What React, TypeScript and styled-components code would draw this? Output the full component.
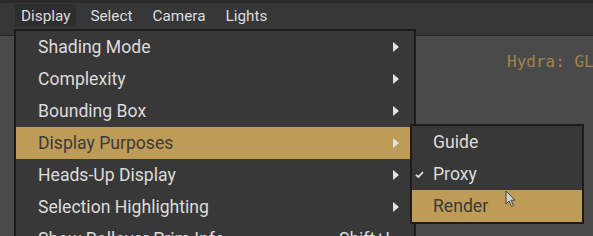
import styled, { createGlobalStyle } from "styled-components";

const GlobalStyle = createGlobalStyle`
  html, body {
    margin: 0;
    padding: 0;
    background: #363636;
    overflow: hidden;
  }
  body {
    font-family: Roboto, "Noto Sans", "Liberation Sans", sans-serif;
  }
`;

const Screen = styled.div`
  position: relative;
  width: 593px;
  height: 236px;
  display: flex;
  flex-direction: column;
  background: #363636;
`;

const TopEdge = styled.div`
  height: 3px;
  background: #2a2a2a;
`;

const MenuBar = styled.div`
  height: 32px;
  display: flex;
  align-items: flex-start;
  gap: 8px;
  padding-left: 15px;
  border-bottom: 1px solid #262626;
  background: #373737;
`;

const BarItem = styled.div<{ $open?: boolean }>`
  height: 23px;
  margin-top: 1px;
  padding: 0 6px;
  display: flex;
  align-items: center;
  font-size: 15.3px;
  color: #dcdcdc;
  background: ${(p) => (p.$open ? "#2e2e2e" : "transparent")};
`;

const Viewport = styled.div`
  flex: 1;
  background: #4a4a4a;
  display: flex;
  justify-content: flex-end;
  padding-top: 16px;
`;

const Renderer = styled.div`
  width: 86px;
  overflow: hidden;
  white-space: nowrap;
  font-family: "DejaVu Sans Mono", "Liberation Mono", monospace;
  font-size: 16px;
  color: #a2844a;
`;

const Menu = styled.div<{ $left: number; $top: number; $width: number }>`
  position: absolute;
  left: ${(p) => p.$left}px;
  top: ${(p) => p.$top}px;
  width: ${(p) => p.$width}px;
  border: 2px solid #1c1c1c;
  background: #383838;
  display: flex;
  flex-direction: column;
`;

const Item = styled.div<{ $active?: boolean; $indent: number }>`
  height: 32px;
  flex: none;
  display: flex;
  align-items: center;
  padding-left: ${(p) => p.$indent}px;
  padding-right: 15px;
  font-size: 17.6px;
  color: ${(p) => (p.$active ? "#3a3a3a" : "#dcdcdc")};
  background: ${(p) => (p.$active ? "#bf9c56" : "transparent")};
  position: relative;
  white-space: nowrap;
`;

const Label = styled.span`
  flex: 1;
`;

const Shortcut = styled.span`
  margin-right: 9px;
`;

const Arrow = styled.span`
  width: 0;
  height: 0;
  border-top: 5px solid transparent;
  border-bottom: 5px solid transparent;
  border-left: 6px solid #e2e2e2;
`;

const Check = styled.svg`
  position: absolute;
  left: 3px;
  top: 13px;
`;

const Cursor = styled.svg`
  position: absolute;
  left: 505px;
  top: 190px;
`;

const mainItems = [
  { label: "Shading Mode" },
  { label: "Complexity" },
  { label: "Bounding Box" },
  { label: "Display Purposes", active: true },
  { label: "Heads-Up Display" },
  { label: "Selection Highlighting" },
  { label: "Show Rollover Prim Info", shortcut: "Shift+I" },
];

const purposes = [
  { label: "Guide" },
  { label: "Proxy", checked: true },
  { label: "Render", active: true },
];

export default function App() {
  return (
    <Screen>
      <GlobalStyle />
      <TopEdge />
      <MenuBar>
        <BarItem $open>Display</BarItem>
        <BarItem>Select</BarItem>
        <BarItem>Camera</BarItem>
        <BarItem>Lights</BarItem>
      </MenuBar>
      <Viewport>
        <Renderer>Hydra: GL</Renderer>
      </Viewport>

      <Menu $left={14} $top={29} $width={398}>
        {mainItems.map((it) => (
          <Item key={it.label} $active={it.active} $indent={22}>
            <Label>{it.label}</Label>
            {it.shortcut ? <Shortcut>{it.shortcut}</Shortcut> : <Arrow />}
          </Item>
        ))}
      </Menu>

      <Menu $left={410} $top={124} $width={170}>
        {purposes.map((it) => (
          <Item key={it.label} $active={it.active} $indent={21}>
            {it.checked && (
              <Check width="9" height="7" viewBox="0 0 9 7">
                <path d="M1 3.8 L3.4 6 L8 1" fill="none" stroke="#e6e6e6" strokeWidth="1.8" />
              </Check>
            )}
            <Label>{it.label}</Label>
          </Item>
        ))}
      </Menu>

      <Cursor width="12" height="18" viewBox="0 0 12 18">
        <path d="M1 1 L1 14 L4 11 L6.5 16.5 L8.5 15.5 L6 10.2 L10 10.2 Z" fill="#d0d0d0" stroke="#404040" strokeWidth="1" />
      </Cursor>
    </Screen>
  );
}
